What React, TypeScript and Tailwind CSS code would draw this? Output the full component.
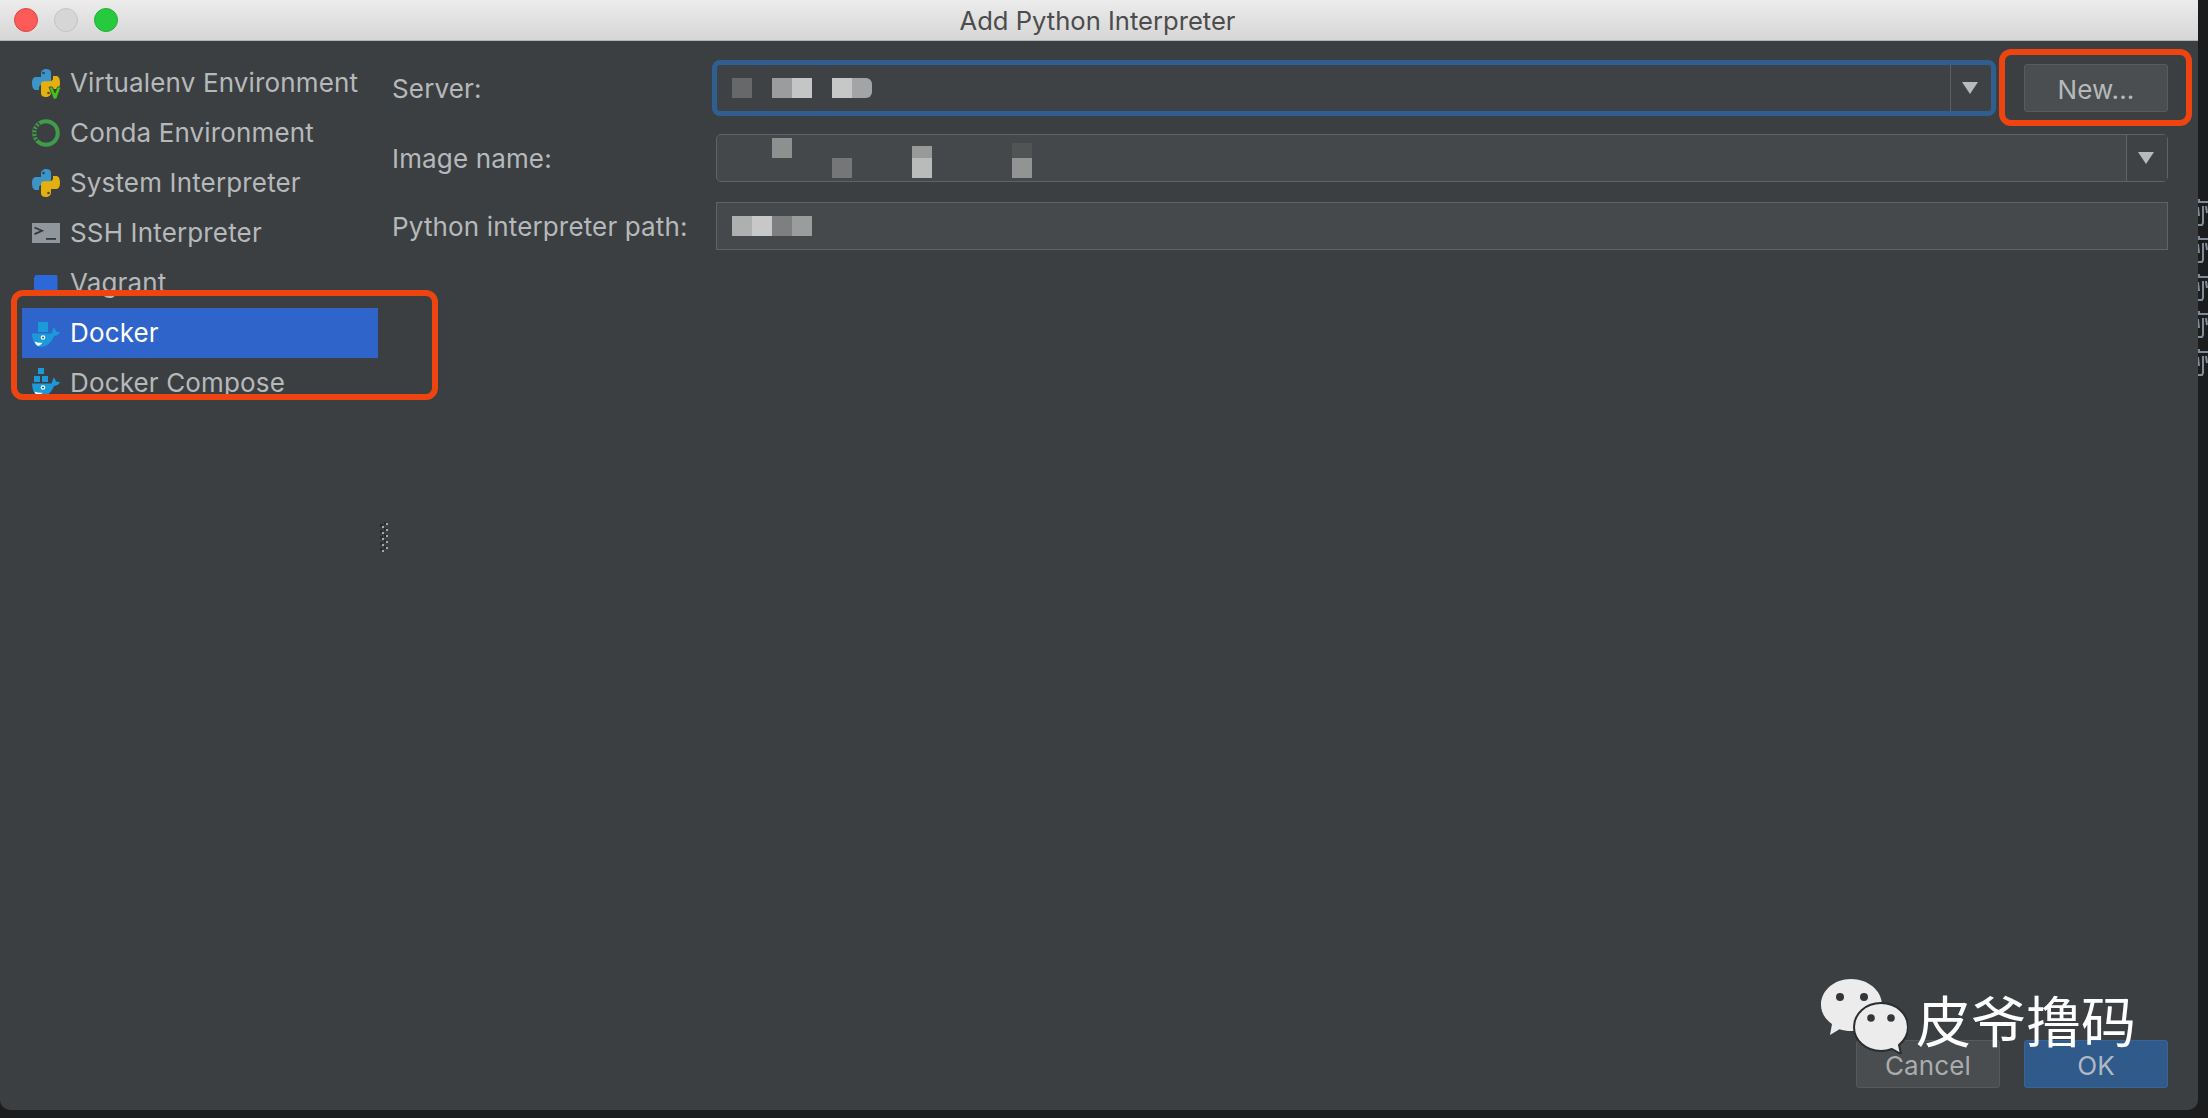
import React from 'react';

const uiFont = "font-['Inter',sans-serif]";

const PythonIcon = () => (
    <svg width="28" height="28" viewBox="0 0 28 28" className="shrink-0">
        <path d="M9 8V4.500C9 1.500 11.500 0 14 0s5 .8 5 4v9c0 1.600-1.200 2.800-3 2.800H10c-2 0-3 1.400-3 3V21H4c-2.600 0-4-2.600-4-7s2-6 4-6z" fill="#3d94c9" />
        <path d="M19 20v3.500c0 3-2.500 4.500-5 4.500s-5-.8-5-4v-9c0-1.600 1.200-2.800 3-2.800h6c2 0 3-1.400 3-3V7h3c2.600 0 4 2.600 4 7s-2 6-4 6z" fill="#e3b010" />
        <circle cx="11.500" cy="4" r="1.300" fill="#24475e" />
        <circle cx="16.500" cy="24" r="1.300" fill="#5e4b10" />
    </svg>
);

const VirtualenvIcon = () => (
    <span className="relative h-7 w-7 shrink-0">
        <PythonIcon />
        <svg width="18" height="18" viewBox="0 0 18 18" className="absolute left-[14px] top-[13px]">
            <path d="M3 5h3.500L9 11l2.500-6H15l-4.500 12h-3z" fill="#3fc41a" stroke="#3c3f41" strokeWidth="0.8" />
        </svg>
    </span>
);

const CondaIcon = () => (
    <svg width="28" height="28" viewBox="0 0 28 28" className="shrink-0">
        <circle cx="14" cy="14" r="11.800" fill="none" stroke="#3f9c49" strokeWidth="4" />
        <path d="M7.500 4.500A11.800 11.800 0 0 0 5.500 22" fill="none" stroke="#3c3f41" strokeWidth="3.800" strokeDasharray="1.500 2" />
    </svg>
);

const SshIcon = () => (
    <svg width="28" height="20" viewBox="0 0 28 20" className="shrink-0">
        <rect width="28" height="20" fill="#8f979c" />
        <path d="M2.500 4.500l7.500 3.300-7.500 3.300" fill="none" stroke="#33373a" strokeWidth="1.800" />
        <rect x="14" y="15" width="10" height="1.800" fill="#33373a" />
    </svg>
);

const VagrantIcon = () => (
    <svg width="28" height="28" viewBox="0 0 28 28" className="shrink-0">
        <path d="M2 9l1.500-3H25l.5 3v16H2z" fill="#2c68d8" />
    </svg>
);

const DockerIcon = ({ compose }: { compose?: boolean }) => (
    <svg width="28" height="28" viewBox="0 0 28 28" className="shrink-0 overflow-visible">
        {compose ? (
            <>
                <rect x="6" y="-1" width="6" height="6" fill="#1a9ad8" />
                <rect x="2" y="7" width="6" height="6" fill="#1a9ad8" />
                <rect x="10" y="7" width="6" height="6" fill="#1a9ad8" />
            </>
        ) : (
            <rect x="6" y="3" width="10" height="10" fill="#1a9ad8" />
        )}
        <path d="M0 14.500h19.500c.6-.3 1.200-3.500 2-6 1.200 1 2.300 2.700 2.500 4l4 .8c-1.500 2.700-3.700 3.700-6 3.700-2.500 6.500-7.500 11-13.500 11C3.500 28 .5 23 0 14.500z" fill="#1a9ad8" />
        <path d="M2.500 22.500c3 1.200 5.500 1.500 8 1-1.500 2.500-3.500 3.500-5 3.300-1.300-.8-2.300-2.500-3-4.300z" fill="#ffffff" />
        <circle cx="11" cy="18.500" r="2.300" fill="#ffffff" />
        <circle cx="11" cy="18.500" r="1" fill="#15587c" />
    </svg>
);

const Arrow = () => (
    <svg width="16" height="12" viewBox="0 0 16 12">
        <path d="M0 0h16L8 12z" fill="#b9babb" />
    </svg>
);

const Block = ({ className }: { className: string }) => <div className={`h-5 w-5 ${className}`} />;

const sidebarRows = [
    { label: 'Virtualenv Environment', icon: <VirtualenvIcon /> },
    { label: 'Conda Environment', icon: <CondaIcon /> },
    { label: 'System Interpreter', icon: <PythonIcon /> },
    { label: 'SSH Interpreter', icon: <SshIcon /> },
    { label: 'Vagrant', icon: <VagrantIcon /> },
    { label: 'Docker', icon: <DockerIcon />, selected: true },
    { label: 'Docker Compose', icon: <DockerIcon compose /> },
];

const labelClass = 'whitespace-nowrap text-[26px] leading-none tracking-[0.15px] text-[#b6b9bb]';

export default function App() {
    return (
        <div className={`relative flex h-[1118px] w-[2208px] overflow-hidden bg-[#1b1c1d] ${uiFont}`}>
            <div className="flex h-[1110px] w-[2198px] shrink-0 flex-col overflow-hidden rounded-b-[10px] bg-[#3c3f41]">
                {/* title bar */}
                <div className="relative flex h-[41px] shrink-0 items-center justify-center border-b border-[#b4b4b4] bg-gradient-to-b from-[#ececec] to-[#d6d6d6]">
                    <div className="absolute left-[14px] top-[8px] flex gap-[16px]">
                        <span className="h-6 w-6 rounded-full border border-[#e0443e] bg-[#fc5b57]" />
                        <span className="h-6 w-6 rounded-full border border-[#c4c4c4] bg-[#d6d6d6]" />
                        <span className="h-6 w-6 rounded-full border border-[#1fb036] bg-[#27c93f]" />
                    </div>
                    <span className="-ml-[3px] pt-[3px] text-[25.6px] text-[#4c4c4c]">Add Python Interpreter</span>
                </div>

                <div className="flex min-h-0 flex-1">
                    {/* left list */}
                    <div className="relative flex w-[378px] shrink-0 flex-col pl-[22px] pt-[17px]">
                        {sidebarRows.map((row) => (
                            <div
                                key={row.label}
                                className={`flex h-[50px] shrink-0 items-center gap-[10px] pl-[10px] ${row.selected ? 'bg-[#2f65ca]' : ''}`}
                            >
                                <span className="flex w-7 shrink-0 justify-center">{row.icon}</span>
                                <span className={`${labelClass} ${row.selected ? '!text-white' : ''}`}>{row.label}</span>
                            </div>
                        ))}
                    </div>

                    {/* form */}
                    <div className="flex min-w-0 flex-1 flex-col pl-[14px] pr-[30px]">
                        <div className="mt-[19px] flex h-[56px] items-center">
                            <span className={`w-[324px] shrink-0 pt-[2px] ${labelClass}`}>Server:</span>
                            <div className="-ml-[4px] flex h-[56px] w-[1284px] shrink-0 rounded-[8px] border-[5px] border-[#2f5f91] bg-[#3f4244]">
                                <div className="flex flex-1 items-center pl-[15px]">
                                    <Block className="bg-[#66686a]" />
                                    <Block className="ml-5 bg-[#9b9c9d]" />
                                    <Block className="bg-[#c4c5c5]" />
                                    <Block className="ml-5 bg-[#c6c7c7]" />
                                    <Block className="rounded-r-[6px] bg-[#a3a4a5]" />
                                </div>
                                <div className="flex w-[41px] items-center justify-center border-l border-[#5d6163] pr-[2px]">
                                    <Arrow />
                                </div>
                            </div>
                            <button className="ml-[28px] h-[48px] w-[144px] shrink-0 rounded-[3px] border border-[#585c5e] bg-[#4a4e50] pt-[2px] text-[26px] tracking-[0.15px] text-[#b6b9bb]">
                                New...
                            </button>
                        </div>

                        <div className="mt-[18px] flex h-[48px] items-center">
                            <span className={`w-[324px] shrink-0 pt-[2px] ${labelClass}`}>Image name:</span>
                            <div className="relative flex h-[48px] flex-1 rounded-[5px] border border-[#5f6365] bg-[#45484a]">
                                <div className="flex-1" />
                                <div className="flex w-[41px] items-center justify-center border-l border-[#5f6365] bg-[#3f4244] pr-[3px]">
                                    <Arrow />
                                </div>
                                <Block className="absolute left-[55px] top-[3px] bg-[#8e9090]" />
                                <Block className="absolute left-[115px] top-[23px] bg-[#747677]" />
                                <div className="absolute left-[195px] top-[11px] h-[12px] w-5 bg-[#989a9a]" />
                                <div className="absolute left-[195px] top-[23px] h-5 w-5 bg-[#b9bbbb]" />
                                <div className="absolute left-[295px] top-[8px] h-[15px] w-5 bg-[#505455]" />
                                <Block className="absolute left-[295px] top-[23px] bg-[#929494]" />
                            </div>
                        </div>

                        <div className="mt-[20px] flex h-[48px] items-center">
                            <span className={`w-[324px] shrink-0 pt-[2px] ${labelClass}`}>Python interpreter path:</span>
                            <div className="flex h-[48px] flex-1 items-center border border-[#5f6365] bg-[#46494b] pl-[15px]">
                                <Block className="bg-[#aeb0b0]" />
                                <Block className="bg-[#c8c8c8]" />
                                <Block className="bg-[#7d7f80]" />
                                <Block className="bg-[#9b9c9c]" />
                            </div>
                        </div>

                        <div className="flex-1" />

                        <div className="mb-[22px] flex justify-end gap-[24px]">
                            <button className="h-[48px] w-[144px] rounded-[3px] border border-[#565a5c] bg-[#4a4d4f] pt-[3px] text-[26px] tracking-[0.15px] text-[#a9acae]">
                                Cancel
                            </button>
                            <button className="h-[48px] w-[144px] rounded-[3px] border border-[#36659a] bg-[#305a8a] pt-[3px] text-[26px] tracking-[0.15px] text-[#aeb9c4]">
                                OK
                            </button>
                        </div>
                    </div>
                </div>
            </div>

            {/* clipped editor text behind the dialog */}
            <svg width="10" height="190" viewBox="0 0 10 190" className="absolute left-[2198px] top-[195px]">
                {[5, 42, 80, 117, 155].map((y) => (
                    <g key={y} fill="none" stroke="#7f8c97" strokeWidth="2">
                        <path d={`M0 ${y}h1v2h9`} />
                        <path d={`M5 ${y + 6}v17l-1 2h-4`} />
                        <path d={`M8 ${y + 6}l1 7`} />
                        <path d={`M0 ${y + 7}l1 9`} />
                    </g>
                ))}
            </svg>

            {/* sash grip between list and form */}
            <svg width="8" height="32" viewBox="0 0 8 32" className="absolute left-[380px] top-[520px]">
                {[0, 6, 12, 18, 24].map((y) => (
                    <g key={y}>
                        <rect x="4" y={y + 2} width="3" height="3" fill="#2a2c2d" />
                        <rect x="6" y={y + 3} width="2" height="2" fill="#a5a7a8" />
                        <rect x="0" y={y + 4} width="3" height="3" fill="#2a2c2d" />
                        <rect x="2" y={y + 6} width="2" height="2" fill="#a5a7a8" />
                    </g>
                ))}
            </svg>

            {/* red annotations */}
            <div className="absolute left-[11px] top-[290px] h-[110px] w-[427px] rounded-[12px] border-[6px] border-[#ee4510]" />
            <div className="absolute left-[1999px] top-[49px] h-[77px] w-[193px] rounded-[12px] border-[6px] border-[#ee4510]" />

            {/* watermark */}
            <div className="absolute left-[1821px] top-[979px] flex items-start">
                <svg width="87" height="75" viewBox="0 0 87 75" className="shrink-0">
                    <path d="M30 0c17 0 31 11.500 31 26 0 14.500-14 26-31 26-4 0-8-.6-11.500-1.800L9 56l2-11C4 40 0 33.500 0 26 0 11.500 13 0 30 0z" fill="#ececec" />
                    <circle cx="19" cy="18" r="4" fill="#34373a" />
                    <circle cx="43" cy="18" r="4" fill="#34373a" />
                    <path d="M60 24c15 0 27 10.500 27 24 0 7-3.500 13.500-9 18l2 9-9-5c-3.500 1.300-7 2-11 2-15 0-27-10.500-27-24s12-24 27-24z" fill="#ececec" stroke="#2a2c2e" strokeWidth="2" />
                    <circle cx="50" cy="39" r="3.800" fill="#34373a" />
                    <circle cx="70" cy="39" r="3.800" fill="#34373a" />
                </svg>
                <span className="ml-[8px] whitespace-nowrap font-['Noto_Sans_CJK_SC',sans-serif] text-[55px] font-normal leading-[78px] text-white">皮爷撸码</span>
            </div>
        </div>
    );
}
